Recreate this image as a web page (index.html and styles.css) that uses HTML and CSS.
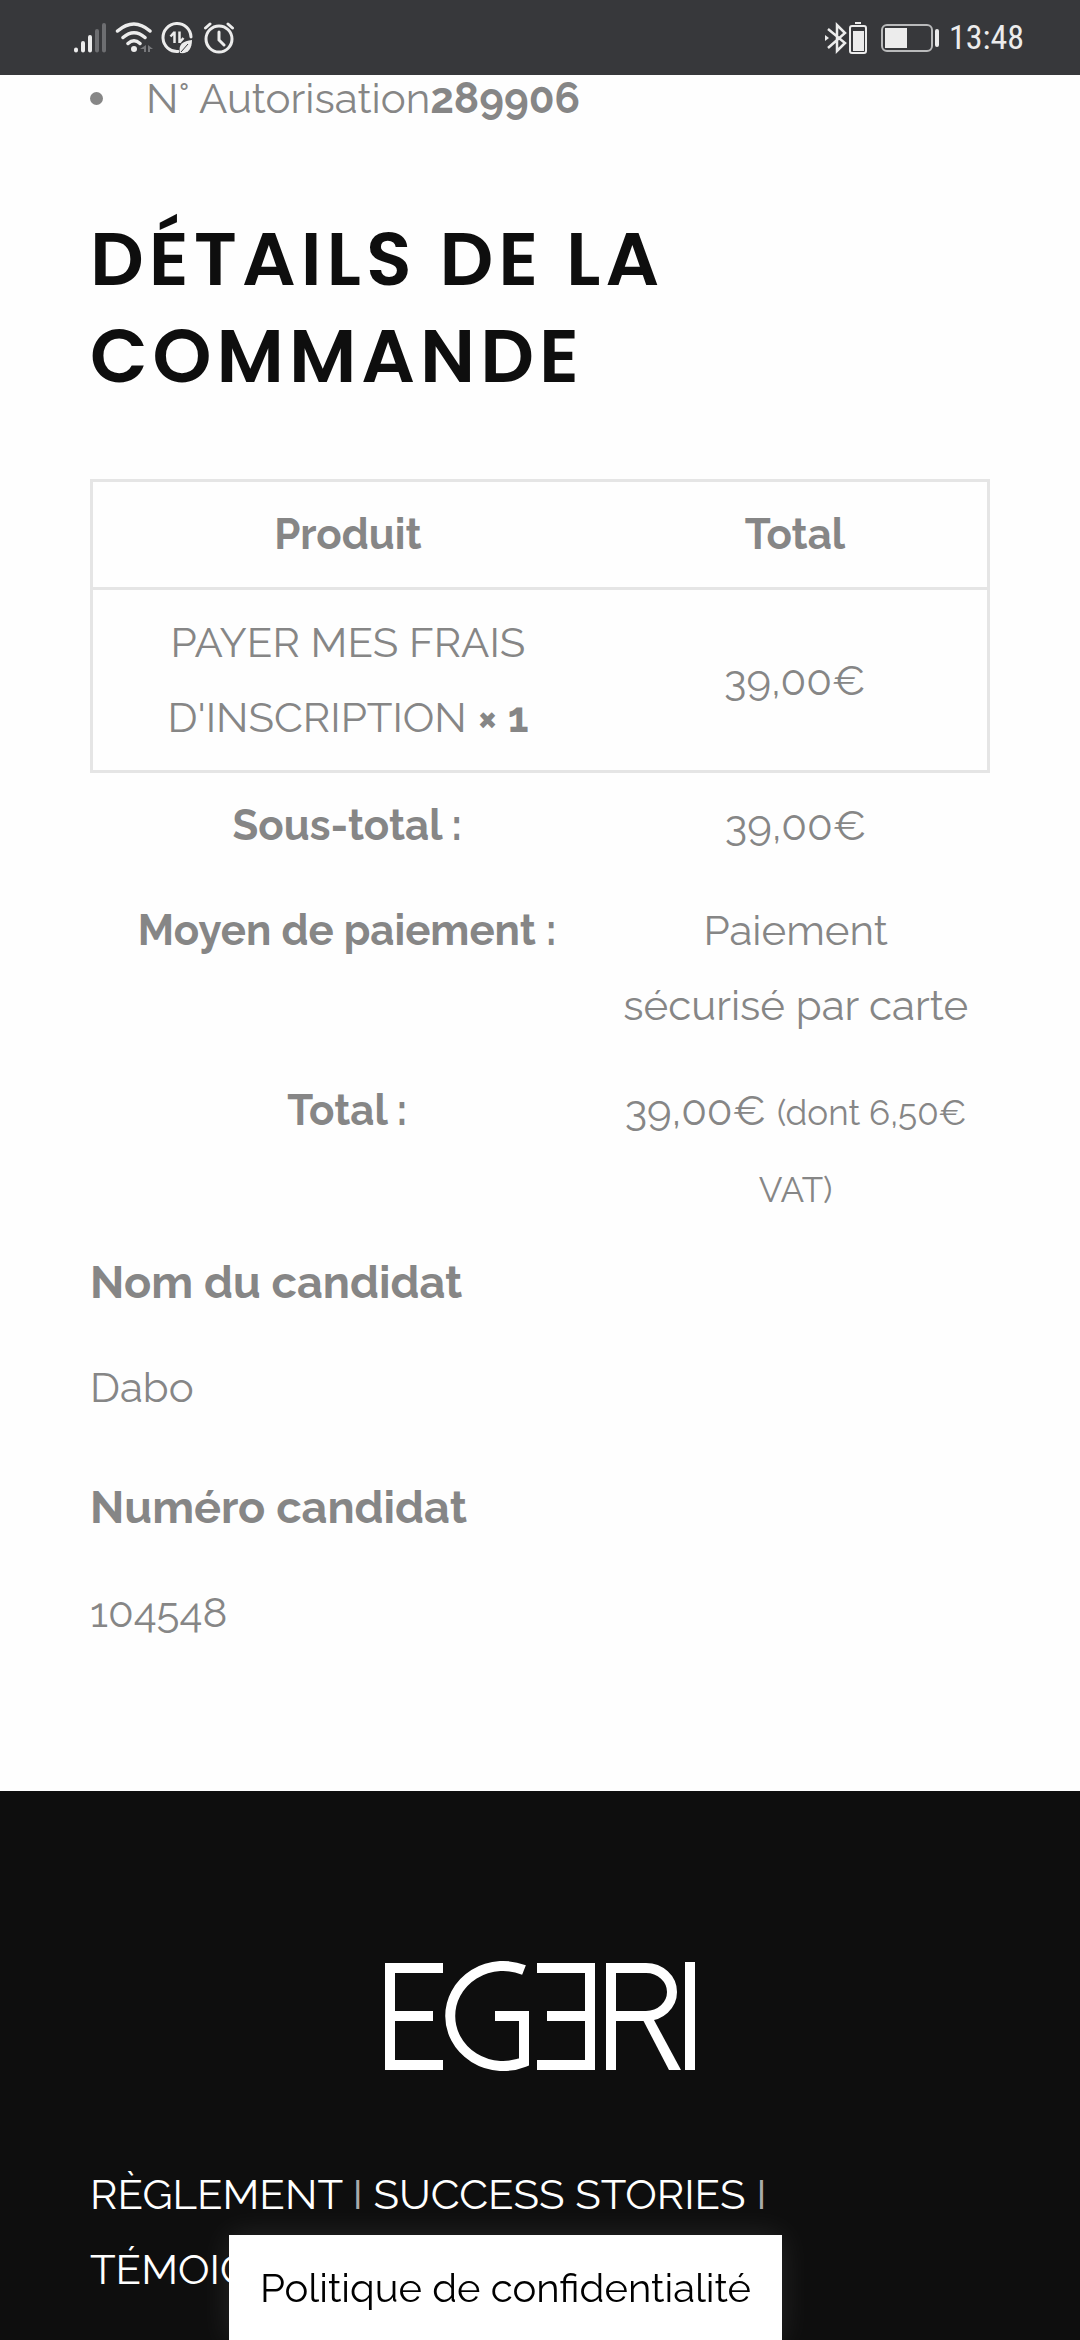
FILE: index.html
```html
<!DOCTYPE html>
<html lang="fr">
<head>
    <meta charset="UTF-8">
    <meta name="viewport" content="width=device-width, initial-scale=1">
    <title>Détails de la commande - EGERI</title>
    <link rel="stylesheet" href="styles.css">
</head>

<body>

<!-- Status bar -->
<div class="statusbar">
    <div class="status-icons">
        <svg width="34" height="32" viewBox="0 0 34 32" fill="none" stroke="#ececec" stroke-width="4" stroke-linecap="round">
            <path d="M3 27.500v1M10 21v7.500M17 15v13.500"/>
            <path d="M24 9v19.500M31 3v25.500" stroke="#6d6e71"/>
        </svg>
        <svg width="38" height="32" viewBox="0 0 38 32" fill="none" stroke="#ececec" stroke-width="3.500" stroke-linecap="round">
            <path d="M2.500 9Q19-5 35 9M8 15.500Q19 6 30 15.500M13 21.500Q19 16 25 21.500"/>
            <circle cx="19" cy="27" r="3" fill="#ececec" stroke="none"/>
            <path d="M31 23v7h-2v-3h-4zM33 30v-7l5 4h-3v3z" fill="#77787b" stroke="none"/>
        </svg>
        <svg width="32" height="32" viewBox="0 0 32 32" fill="none" stroke="#ececec" stroke-width="3">
            <path d="M17 29.500A14 14 0 1 1 30 15" stroke-linecap="round"/>
            <path d="M13.500 9.500V21M13.500 10l-4 4.500M18.500 9.500V21M18.500 20.500l4-4.500" stroke-width="2.500"/>
            <path d="M19 31C17 22 22 19 31 18c0 9-4 14-12 13z" fill="#ececec" stroke="none"/>
            <path d="M20 30l7-8" stroke="#37383b" stroke-width="1"/>
        </svg>
        <svg class="alarm" width="32" height="32" viewBox="0 0 32 32" fill="none" stroke="#ececec" stroke-width="3" stroke-linecap="round">
            <circle cx="16" cy="17" r="13"/>
            <path d="M16 10v8l5 5M2.500 6L7 2M25 2l4.500 4"/>
        </svg>
    </div>
    <div class="status-icons">
        <svg width="44" height="32" viewBox="0 0 44 32" fill="none" stroke="#ececec" stroke-width="2.500">
            <path d="M4 7l17 14-8 8V3l8 8L4 26"/>
            <path d="M1 13l4 3-4 3z" fill="#ececec" stroke="none"/>
            <rect x="26" y="4" width="16" height="27" rx="2" stroke-width="2"/>
            <path d="M29 9h11v20H29zM31 0h6v2h-6z" fill="#ececec" stroke="none"/>
        </svg>
        <svg class="battery" width="58" height="30" viewBox="0 0 58 30" fill="none" stroke="#b9babb" stroke-width="2">
            <rect x="1" y="2" width="50" height="26" rx="5"/>
            <path d="M4 5h22v20H4z" fill="#ececec" stroke="none"/>
            <rect x="54" y="6" width="4" height="18" rx="2" fill="#ececec" stroke="none"/>
        </svg>
        <span class="clock">13:48</span>
    </div>
</div>

<main class="container">
    <ul class="order-info">
        <li>N° Autorisation<strong>289906</strong></li>
    </ul>

    <h2>Détails de la commande</h2>

    <table class="order-table">
        <thead>
            <tr>
                <th class="product">Produit</th>
                <th>Total</th>
            </tr>
        </thead>
        <tbody>
            <tr>
                <td>PAYER MES FRAIS D'INSCRIPTION <strong>×&nbsp;1</strong></td>
                <td>39,00€</td>
            </tr>
        </tbody>
        <tfoot>
            <tr>
                <th scope="row">Sous-total :</th>
                <td>39,00€</td>
            </tr>
            <tr>
                <th scope="row">Moyen de paiement :</th>
                <td>Paiement<br>sécurisé par carte</td>
            </tr>
            <tr>
                <th scope="row">Total :</th>
                <td>39,00€ <small>(dont 6,50€ VAT)</small></td>
            </tr>
        </tfoot>
    </table>

    <h4>Nom du candidat</h4>
    <p>Dabo</p>
    <h4>Numéro candidat</h4>
    <p>104548</p>
</main>

<footer class="footer">
    <svg class="logo" width="310" height="108" viewBox="0 0 310 108" fill="none" stroke="#fff" stroke-width="10" role="img" aria-label="EGERI">
        <path d="M58 6H5v97h53M5 54h43"/>
        <path d="M139 8A53 50 0 1 0 139 100V54H110"/>
        <path d="M152 6h53v97h-53M162 54h43"/>
        <path d="M226 108V6h35a26 24 0 0 1 0 48h-35"/>
        <path d="M258 58l26 50h12l-27-50z" fill="#fff" stroke="none"/>
        <path d="M305 0v108"/>
    </svg>
    <nav class="footer-links">
        <a href="#">RÈGLEMENT</a> I <a href="#">SUCCESS STORIES</a> I <a href="#">TÉMOIGNAGES</a>
    </nav>
</footer>

<a class="privacy" href="#">Politique de confidentialité</a>

</body>
</html>
```
FILE: styles.css
```css
* {
    box-sizing: border-box;
}
body {
    margin: 0;
    height: 100vh;
    display: flex;
    flex-direction: column;
    overflow: hidden;
    background-color: #fefefe;
    color: #868686;
    font-family: Raleway, Lato, sans-serif;
    font-size: 42px;
    line-height: 75px;
}
.statusbar {
    display: flex;
    flex-shrink: 0;
    justify-content: space-between;
    align-items: center;
    height: 75px;
    padding: 0 56px 0 73px;
    background-color: #37383b;
}
.status-icons {
    display: flex;
    align-items: center;
    gap: 8px;
}
.alarm {
    margin-left: 2px;
}
.battery {
    margin: 0 2px 0 5px;
}
.clock {
    color: #ececec;
    font-family: "Roboto Condensed", "Liberation Sans Narrow", Roboto, sans-serif;
    font-size: 34px;
}
.container {
    flex-shrink: 0;
    padding: 0 90px 96px;
}
.order-info {
    margin: -14px 0 0;
    padding: 0;
    list-style: none;
}
.order-info li {
    display: flex;
    align-items: center;
}
.order-info li::before {
    content: "";
    width: 13px;
    height: 13px;
    margin-right: 43px;
    border-radius: 50%;
    background-color: #868686;
}
h2 {
    margin: 74px 0 75px;
    color: #0e0e0e;
    font-family: Poppins, Inter, sans-serif;
    font-size: 75px;
    font-weight: 600;
    line-height: 97px;
    letter-spacing: 5px;
    text-transform: uppercase;
}
.order-table {
    width: 100%;
    margin-bottom: 3px;
    border-collapse: collapse;
    table-layout: fixed;
    text-align: center;
}
.order-table thead,
.order-table tbody {
    border: 3px solid #e5e5e5;
}
.order-table th,
.order-table td {
    padding: 15px;
}
.order-table .product {
    width: 57%;
}
.order-table tfoot th,
.order-table tfoot td {
    vertical-align: top;
}
small {
    font-size: 35px;
}
h4 {
    margin: 0;
    font-size: 45px;
    line-height: 75px;
}
p {
    margin: 30px 0 45px;
}
.footer {
    flex: 1 0 auto;
    padding: 171px 90px 0;
    background-color: #0e0e0e;
    color: #aaa;
}
.logo {
    display: block;
    margin: 0 auto 87px;
    overflow: visible;
}
.footer-links a {
    color: #fff;
    text-decoration: none;
}
.privacy {
    position: fixed;
    bottom: 0;
    left: 229px;
    padding: 15px 31px;
    background-color: #fff;
    color: #000;
    font-size: 40px;
    text-decoration: none;
    box-shadow: 0 0 30px rgba(255, 255, 255, 0.1);
}
```
